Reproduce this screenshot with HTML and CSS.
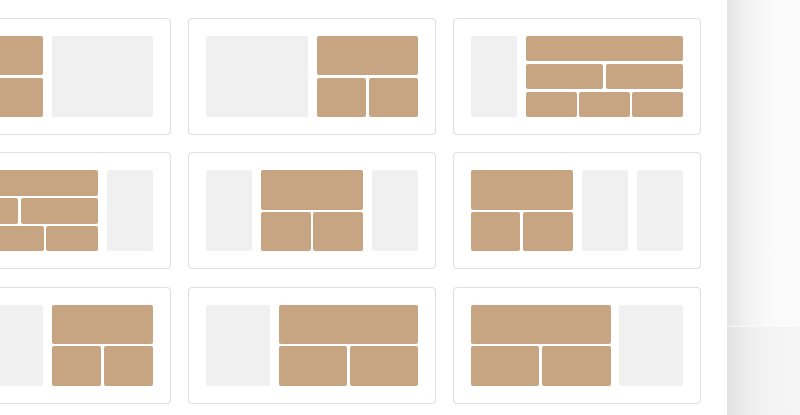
FILE: index.html
```html
<!DOCTYPE html>
<html>
<head>
<meta charset="utf-8">
<link rel="stylesheet" href="styles.css">
</head>
<body>
<div class="page">
  <div class="main">
    <div class="grid">
      <!-- Row 1 -->
      <div class="card"><div class="layout">
        <div class="stack s2">
          <div class="row"><div class="cell"></div></div>
          <div class="row"><div class="cell"></div><div class="cell"></div></div>
        </div>
        <div class="blank s2"></div>
      </div></div>
      <div class="card"><div class="layout">
        <div class="blank s2"></div>
        <div class="stack s2">
          <div class="row"><div class="cell"></div></div>
          <div class="row"><div class="cell"></div><div class="cell"></div></div>
        </div>
      </div></div>
      <div class="card"><div class="layout">
        <div class="blank s1"></div>
        <div class="stack s3">
          <div class="row"><div class="cell"></div></div>
          <div class="row"><div class="cell"></div><div class="cell"></div></div>
          <div class="row"><div class="cell"></div><div class="cell"></div><div class="cell"></div></div>
        </div>
      </div></div>
      <!-- Row 2 -->
      <div class="card"><div class="layout">
        <div class="stack s3">
          <div class="row"><div class="cell"></div></div>
          <div class="row"><div class="cell"></div><div class="cell"></div></div>
          <div class="row"><div class="cell g2"></div><div class="cell"></div></div>
        </div>
        <div class="blank s1"></div>
      </div></div>
      <div class="card"><div class="layout">
        <div class="blank s1"></div>
        <div class="stack s2">
          <div class="row"><div class="cell"></div></div>
          <div class="row"><div class="cell"></div><div class="cell"></div></div>
        </div>
        <div class="blank s1"></div>
      </div></div>
      <div class="card"><div class="layout">
        <div class="stack s2">
          <div class="row"><div class="cell"></div></div>
          <div class="row"><div class="cell"></div><div class="cell"></div></div>
        </div>
        <div class="blank s1"></div>
        <div class="blank s1"></div>
      </div></div>
      <!-- Row 3 -->
      <div class="card"><div class="layout">
        <div class="blank s2"></div>
        <div class="stack s2">
          <div class="row"><div class="cell"></div></div>
          <div class="row"><div class="cell"></div><div class="cell"></div></div>
        </div>
      </div></div>
      <div class="card"><div class="layout narrow-left">
        <div class="blank"></div>
        <div class="stack">
          <div class="row"><div class="cell"></div></div>
          <div class="row"><div class="cell"></div><div class="cell"></div></div>
        </div>
      </div></div>
      <div class="card"><div class="layout narrow-right">
        <div class="stack">
          <div class="row"><div class="cell"></div></div>
          <div class="row"><div class="cell"></div><div class="cell"></div></div>
        </div>
        <div class="blank"></div>
      </div></div>
    </div>
  </div>
  <div class="aside">
    <div class="aside-top"></div>
    <div class="aside-bottom"></div>
  </div>
</div>
</body>
</html>
```

FILE: styles.css
```css
html, body {
  margin: 0;
  padding: 0;
  font-family: "Liberation Sans", Arial, sans-serif;
  background: #ffffff;
}

.page {
  display: flex;
  width: 800px;
  height: 415px;
  overflow: hidden;
}

.main {
  width: 727px;
  flex: none;
  background: #ffffff;
  overflow: hidden;
}

.grid {
  display: grid;
  grid-template-columns: repeat(3, 248px);
  column-gap: 17px;
  row-gap: 17.3px;
  margin-left: -77px;
  padding-top: 18px;
}

.card {
  box-sizing: border-box;
  height: 117px;
  border: 1px solid #dfdfdf;
  border-radius: 4px;
  padding: 17px;
  background: #ffffff;
  box-shadow: 0 0 1px rgba(0, 0, 0, 0.06);
}

.layout {
  display: grid;
  grid-template-columns: repeat(4, 1fr);
  column-gap: 9px;
  height: 81px;
}

.layout.narrow-left {
  grid-template-columns: 64px 1fr;
  column-gap: 8.5px;
}

.layout.narrow-right {
  grid-template-columns: 1fr 64px;
  column-gap: 8.5px;
}

.s1 { grid-column: span 1; }
.s2 { grid-column: span 2; }
.s3 { grid-column: span 3; }

.blank {
  background: #f0f0f0;
  border-radius: 2px;
}

.stack {
  display: flex;
  flex-direction: column;
  gap: 2.4px;
}

.row {
  flex: 1;
  display: flex;
  gap: 2.6px;
}

.cell {
  flex: 1;
  background: #c8a582;
  border-radius: 2px;
}

.cell.g2 { flex: 2; }

.aside {
  flex: 1;
  display: flex;
  flex-direction: column;
}

.aside-top {
  height: 326px;
  background: linear-gradient(to right, #e4e4e4 0%, #f3f3f3 30%, #fafafa 60%, #fbfbfb 100%);
}

.aside-bottom {
  flex: 1;
  border-top: 1px solid #f8f8f8;
  background: linear-gradient(to right, #e2e2e2 0%, #eeeeee 30%, #f4f4f4 60%, #f5f5f5 100%);
}
```
